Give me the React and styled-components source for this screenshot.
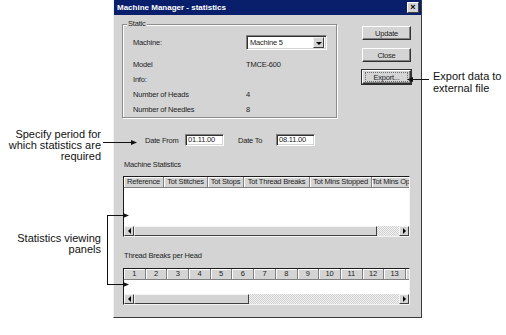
import styled, { createGlobalStyle } from 'styled-components';

const GlobalStyle = createGlobalStyle`
  html, body { margin: 0; padding: 0; background: #fff; }
  body { font-family: "Liberation Sans", Arial, sans-serif; }
`;

const Page = styled.div`
  position: relative;
  width: 506px;
  height: 335px;
  overflow: hidden;
`;

const Window = styled.div`
  margin-left: 113px;
  width: 309px;
  height: 318px;
  box-sizing: border-box;
  background: #d4d4d4;
  border: 1px solid;
  border-top: none;
  border-color: #f0f0f0 #3a3a3a #3a3a3a #f0f0f0;
  font-family: "Liberation Sans", Arial, sans-serif;
  font-size: 7.5px;
  letter-spacing: -0.2px;
  color: #1e1e1e;
  display: flex;
  flex-direction: column;
  white-space: nowrap;
`;

const TitleBar = styled.div`
  height: 15px;
  background: #0a1f6c;
  color: #fff;
  font-size: 8px;
  letter-spacing: 0;
  font-weight: bold;
  display: flex;
  align-items: center;
  justify-content: space-between;
  padding: 0 2px 0 3px;
`;

const CloseBox = styled.div`
  width: 10px;
  height: 9px;
  background: #d4d4d4;
  border: 1px solid;
  border-color: #fff #404040 #404040 #fff;
  color: #000;
  font-size: 9px;
  line-height: 9px;
  text-align: center;
  font-weight: bold;
`;

const Body = styled.div`
  padding: 9px 0 0 8px;
  display: flex;
  flex-direction: column;
`;

const TopSection = styled.div`
  display: flex;
  align-items: flex-start;
`;

const GroupBox = styled.div`
  position: relative;
  width: 215px;
  height: 94px;
  box-sizing: border-box;
  border: 1px solid #8c8c8c;
  box-shadow: inset 1px 1px #fff, 1px 1px #fff;
  padding: 10px 0 0 10px;
`;

const Legend = styled.span`
  position: absolute;
  top: -6px;
  left: 4px;
  padding: 0 1px;
  background: #d4d4d4;
  line-height: 10px;
`;

const FieldRow = styled.div`
  display: grid;
  grid-template-columns: 113px auto;
  align-items: center;
  height: ${p => p.$h || 15}px;
  margin-bottom: ${p => p.$gap || 0}px;
`;

const Sunken = styled.div`
  box-sizing: border-box;
  background: #fff;
  border: 1px solid;
  border-color: #808080 #fff #fff #808080;
  box-shadow: inset 1px 1px #303030, inset -1px -1px #d4d4d4;
`;

const Combo = styled(Sunken)`
  width: 81px;
  height: 15px;
  display: flex;
  align-items: center;
  padding: 0 2px 0 3px;
  justify-content: space-between;
`;

const ComboButton = styled.div`
  width: 11px;
  height: 11px;
  box-sizing: border-box;
  background: #d4d4d4;
  border: 1px solid;
  border-color: #f4f4f4 #404040 #404040 #f4f4f4;
  display: flex;
  align-items: center;
  justify-content: center;
`;

const Tri = styled.span`
  width: 0;
  height: 0;
  border: 3px solid transparent;
  ${p => p.$dir === 'down' && `border-top: 3px solid #000; border-bottom: none; margin-top: 1px;`}
  ${p => p.$dir === 'left' && `border-right: 3px solid #000; border-left: none;`}
  ${p => p.$dir === 'right' && `border-left: 3px solid #000; border-right: none;`}
`;

const ButtonColumn = styled.div`
  margin: 2px 0 0 25px;
  display: flex;
  flex-direction: column;
  gap: 8px;
`;

const Button = styled.div`
  width: 49px;
  height: 14px;
  box-sizing: border-box;
  border: 1px solid;
  border-color: #fff #303030 #303030 #fff;
  box-shadow: inset -1px -1px #808080;
  display: flex;
  align-items: center;
  justify-content: center;
  position: relative;
  ${p => p.$focused && `
    outline: 1px solid #303030;
    &::after {
      content: "";
      position: absolute;
      inset: 1px 2px 1px 2px;
      border: 1px dotted #707070;
    }
  `}
`;

const DateRow = styled.div`
  margin-top: 16px;
  padding-left: 23px;
  display: flex;
  align-items: center;
  height: 12px;
`;

const DateLabel = styled.span`
  width: ${p => p.$w}px;
  margin-left: ${p => p.$ml || 0}px;
`;

const DateInput = styled(Sunken)`
  width: 39px;
  height: 12px;
  line-height: 10px;
  padding-left: 2px;
`;

const SectionLabel = styled.div`
  margin-top: 14px;
  padding-left: 2px;
  line-height: 10px;
`;

const Grid = styled.div`
  margin: ${p => p.$mt}px 0 0 1px;
  width: 287px;
  height: ${p => p.$h}px;
  box-sizing: border-box;
  border: 1px solid;
  border-color: #1c1c1c #f4f4f4 #f4f4f4 #1c1c1c;
  display: flex;
  flex-direction: column;
  overflow: hidden;
`;

const HeaderRow = styled.div`
  display: flex;
  height: 11px;
  flex: none;
  overflow: hidden;
`;

const HeaderCell = styled.div`
  flex: none;
  width: ${p => p.$w}px;
  box-sizing: border-box;
  border-right: 1px solid #808080;
  border-bottom: 1px solid #808080;
  box-shadow: inset 1px 1px #fff;
  text-align: center;
  line-height: 10px;
  overflow: hidden;
`;

const GridBody = styled.div`
  flex: 1;
  background: #fff;
`;

const ScrollBar = styled.div`
  display: flex;
  height: 10px;
  flex: none;
`;

const ScrollButton = styled.div`
  width: 10px;
  height: 10px;
  box-sizing: border-box;
  background: #d4d4d4;
  border: 1px solid;
  border-color: #f4f4f4 #404040 #404040 #f4f4f4;
  display: flex;
  align-items: center;
  justify-content: center;
`;

const Thumb = styled.div`
  width: ${p => p.$w}px;
  box-sizing: border-box;
  background: #d4d4d4;
  border: 1px solid;
  border-color: #f4f4f4 #404040 #404040 #f4f4f4;
`;

const Track = styled.div`
  flex: 1;
  background: repeating-conic-gradient(#d0d0d0 0 25%, #f2f2f2 0 50%) 0 0 / 2px 2px;
`;

const Callout = styled.div`
  position: absolute;
  top: ${p => p.$top}px;
  ${p => (p.$right != null ? `right: ${p.$right}px; text-align: right;` : `left: ${p.$left}px;`)}
  font-size: 11px;
  line-height: ${p => p.$lh || 11}px;
  color: #111;
  white-space: nowrap;
`;

const Arrows = styled.svg`
  position: absolute;
  left: 0;
  top: 0;
  pointer-events: none;
`;

const statCols = [
  ['Reference', 40],
  ['Tot Stitches', 44],
  ['Tot Stops', 36],
  ['Tot Thread Breaks', 66],
  ['Tot Mins Stopped', 62],
  ['Tot Mins Operating', 60],
];

const headCols = Array.from({ length: 14 }, (_, i) => i + 1);

const Scroller = ({ thumb }) => (
  <ScrollBar>
    <ScrollButton><Tri $dir="left" /></ScrollButton>
    <Thumb $w={thumb} />
    <Track />
    <ScrollButton><Tri $dir="right" /></ScrollButton>
  </ScrollBar>
);

export default function App() {
  return (
    <Page>
      <GlobalStyle />
      <Window>
        <TitleBar>
          <span>Machine Manager - statistics</span>
          <CloseBox>×</CloseBox>
        </TitleBar>
        <Body>
          <TopSection>
            <GroupBox>
              <Legend>Static</Legend>
              <FieldRow $gap={7}>
                <span>Machine:</span>
                <Combo>
                  <span>Machine 5</span>
                  <ComboButton><Tri $dir="down" /></ComboButton>
                </Combo>
              </FieldRow>
              <FieldRow>
                <span>Model</span>
                <span>TMCE-600</span>
              </FieldRow>
              <FieldRow>
                <span>Info:</span>
                <span />
              </FieldRow>
              <FieldRow>
                <span>Number of Heads</span>
                <span>4</span>
              </FieldRow>
              <FieldRow>
                <span>Number of Needles</span>
                <span>8</span>
              </FieldRow>
            </GroupBox>
            <ButtonColumn>
              <Button>Update</Button>
              <Button>Close</Button>
              <Button $focused>Export...</Button>
            </ButtonColumn>
          </TopSection>

          <DateRow>
            <DateLabel $w={40}>Date From</DateLabel>
            <DateInput>01.11.00</DateInput>
            <DateLabel $w={38} $ml={14}>Date To</DateLabel>
            <DateInput>08.11.00</DateInput>
          </DateRow>

          <SectionLabel>Machine Statistics</SectionLabel>
          <Grid $mt={6} $h={61}>
            <HeaderRow>
              {statCols.map(([label, w]) => (
                <HeaderCell key={label} $w={w}>{label}</HeaderCell>
              ))}
            </HeaderRow>
            <GridBody />
            <Scroller thumb={243} />
          </Grid>

          <SectionLabel>Thread Breaks per Head</SectionLabel>
          <Grid $mt={7} $h={37}>
            <HeaderRow>
              {headCols.map(n => (
                <HeaderCell key={n} $w={21.7}>{n}</HeaderCell>
              ))}
            </HeaderRow>
            <GridBody />
            <Scroller thumb={115} />
          </Grid>
        </Body>
      </Window>

      <Callout $top={129} $right={405}>
        Specify period for<br />which statistics are<br />required
      </Callout>
      <Callout $top={233} $right={405}>
        Statistics viewing<br />panels
      </Callout>
      <Callout $top={70} $left={433} $lh={12}>
        Export data to<br />external file
      </Callout>

      <Arrows width="506" height="335" viewBox="0 0 506 335">
        <g stroke="#111" strokeWidth="1" fill="none" shapeRendering="crispEdges">
          <line x1="103" y1="142.5" x2="132" y2="142.5" />
          <polyline points="124,215.5 107.5,215.5 107.5,284.5 124,284.5" />
          <line x1="412" y1="79.5" x2="429" y2="79.5" />
        </g>
        <g fill="#111">
          <polygon points="137,142.5 131,140 131,145" />
          <polygon points="129,215.5 123,213 123,218" />
          <polygon points="129,284.5 123,282 123,287" />
          <polygon points="407,79.5 413,77 413,82" />
        </g>
      </Arrows>
    </Page>
  );
}
